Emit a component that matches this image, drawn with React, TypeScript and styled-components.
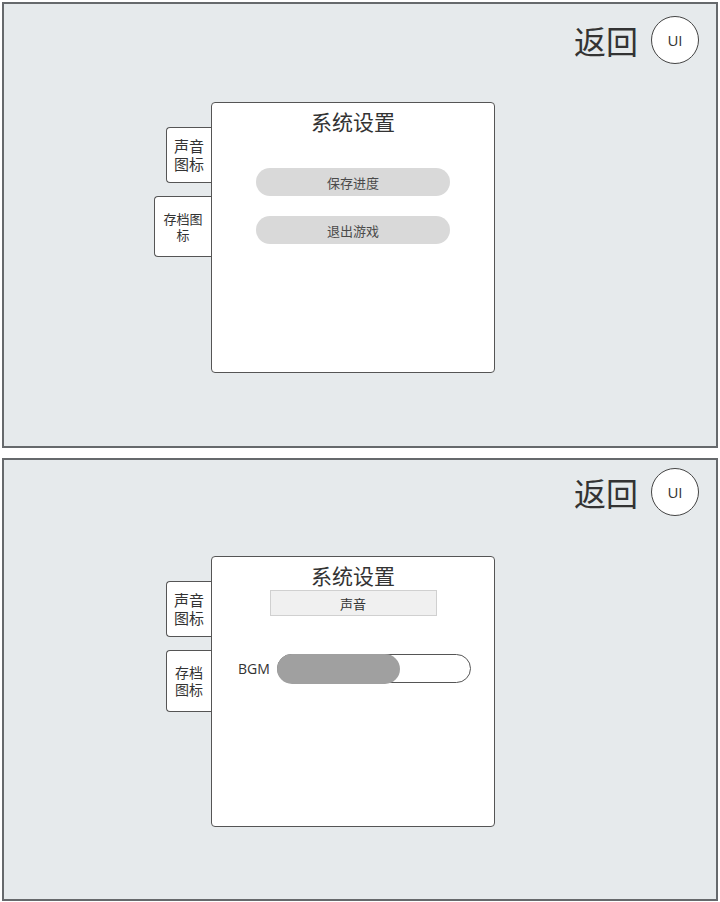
import React from "react";
import styled, { createGlobalStyle } from "styled-components";

const GlobalStyle = createGlobalStyle`
  html, body {
    margin: 0;
    padding: 0;
    background: #ffffff;
  }
  body {
    font-family: "Noto Sans CJK SC", "Noto Sans", sans-serif;
    color: #333;
  }
`;

const Page = styled.div`
  display: flex;
  flex-direction: column;
  gap: 10px;
  padding: 2px 2px 0 2px;
  width: 720px;
  box-sizing: border-box;
`;

const Frame = styled.section<{ $height: number }>`
  height: ${(p) => p.$height}px;
  box-sizing: border-box;
  border: 2px solid #66696c;
  background: #e6eaec;
  display: flex;
  flex-direction: column;
`;

const Header = styled.div<{ $top: number }>`
  display: flex;
  justify-content: flex-end;
  align-items: center;
  gap: 13px;
  padding: ${(p) => p.$top}px 17px 0 0;
`;

const BackLabel = styled.span`
  font-size: 32px;
  line-height: 40px;
  color: #333;
`;

const Avatar = styled.div`
  width: 48px;
  height: 48px;
  box-sizing: border-box;
  border: 1.5px solid #444;
  border-radius: 50%;
  background: #fff;
  display: flex;
  align-items: center;
  justify-content: center;
  font-family: "Open Sans", "Noto Sans", sans-serif;
  font-size: 15px;
  color: #333;
`;

const Stage = styled.div<{ $gap: number }>`
  display: flex;
  margin-top: ${(p) => p.$gap}px;
  padding-left: 150px;
`;

const TabColumn = styled.div`
  width: 57px;
  display: flex;
  flex-direction: column;
  align-items: flex-end;
  gap: 13px;
  padding-top: 25px;
`;

const Tab = styled.div<{ $w: number; $h: number; $size: number }>`
  width: ${(p) => p.$w}px;
  height: ${(p) => p.$h}px;
  box-sizing: border-box;
  border: 1px solid #555;
  border-right: none;
  border-radius: 4px 0 0 4px;
  background: #fff;
  display: flex;
  flex-direction: column;
  align-items: center;
  justify-content: center;
  text-align: center;
  font-size: ${(p) => p.$size}px;
  color: #333;
  padding: 0 3px;
`;

const TabLine = styled.span`
  display: block;
  line-height: 1.2;
`;

const Panel = styled.div`
  width: 284px;
  height: 271px;
  box-sizing: border-box;
  border: 1px solid #555;
  border-radius: 4px;
  background: #fff;
  display: flex;
  flex-direction: column;
  align-items: center;
`;

const Title = styled.h2`
  margin: 0;
  padding-top: 6px;
  font-size: 21px;
  line-height: 24px;
  font-weight: 400;
  color: #333;
`;

const MenuList = styled.div`
  display: flex;
  flex-direction: column;
  gap: 20px;
  margin-top: 35px;
`;

const PillButton = styled.button`
  width: 194px;
  height: 28px;
  border: none;
  border-radius: 14px;
  background: #d9d9d9;
  color: #4a4a4a;
  font-family: inherit;
  font-size: 13px;
  padding: 0;
`;

const SectionTag = styled.div`
  width: 167px;
  height: 26px;
  margin-top: 3px;
  box-sizing: border-box;
  border: 1px solid #d0d0d0;
  background: #f0f0f0;
  display: flex;
  align-items: center;
  justify-content: center;
  font-size: 13px;
  color: #333;
`;

const SliderRow = styled.div`
  align-self: stretch;
  display: flex;
  align-items: center;
  gap: 9px;
  margin-top: 38px;
  padding-left: 26px;
`;

const SliderLabel = styled.span`
  font-family: "Open Sans", "Noto Sans", sans-serif;
  font-size: 14px;
  color: #333;
  width: 30px;
`;

const Track = styled.div`
  position: relative;
  width: 194px;
  height: 29px;
  box-sizing: border-box;
  border: 1.5px solid #555;
  border-radius: 15px;
  background: #fff;
`;

const Fill = styled.div`
  position: absolute;
  left: -1.5px;
  top: -1.5px;
  bottom: -1.5px;
  border-radius: 15px;
  background: #a0a0a0;
`;

const volume = 0.645;

type TabSpec = { lines: string[]; w: number; h: number; size: number };

const SideTabs = ({ tabs }: { tabs: TabSpec[] }) => (
  <TabColumn>
    {tabs.map((t) => (
      <Tab key={t.lines.join("")} $w={t.w} $h={t.h} $size={t.size}>
        {t.lines.map((l) => (
          <TabLine key={l}>{l}</TabLine>
        ))}
      </Tab>
    ))}
  </TabColumn>
);

const TopBar = ({ top }: { top: number }) => (
  <Header $top={top}>
    <BackLabel>返回</BackLabel>
    <Avatar>UI</Avatar>
  </Header>
);

const App = () => {
  return (
    <>
      <GlobalStyle />
      <Page>
        <Frame $height={446}>
          <TopBar top={12} />
          <Stage $gap={38}>
            <SideTabs
              tabs={[
                { lines: ["声音", "图标"], w: 45, h: 56, size: 15 },
                { lines: ["存档图", "标"], w: 57, h: 61, size: 13 },
              ]}
            />
            <Panel>
              <Title>系统设置</Title>
              <MenuList>
                <PillButton>保存进度</PillButton>
                <PillButton>退出游戏</PillButton>
              </MenuList>
            </Panel>
          </Stage>
        </Frame>

        <Frame $height={443}>
          <TopBar top={8} />
          <Stage $gap={40}>
            <SideTabs
              tabs={[
                { lines: ["声音", "图标"], w: 45, h: 56, size: 15 },
                { lines: ["存档", "图标"], w: 45, h: 62, size: 14 },
              ]}
            />
            <Panel>
              <Title>系统设置</Title>
              <SectionTag>声音</SectionTag>
              <SliderRow>
                <SliderLabel>BGM</SliderLabel>
                <Track>
                  <Fill style={{ width: `${volume * 100}%` }} />
                </Track>
              </SliderRow>
            </Panel>
          </Stage>
        </Frame>
      </Page>
    </>
  );
};

export default App;
